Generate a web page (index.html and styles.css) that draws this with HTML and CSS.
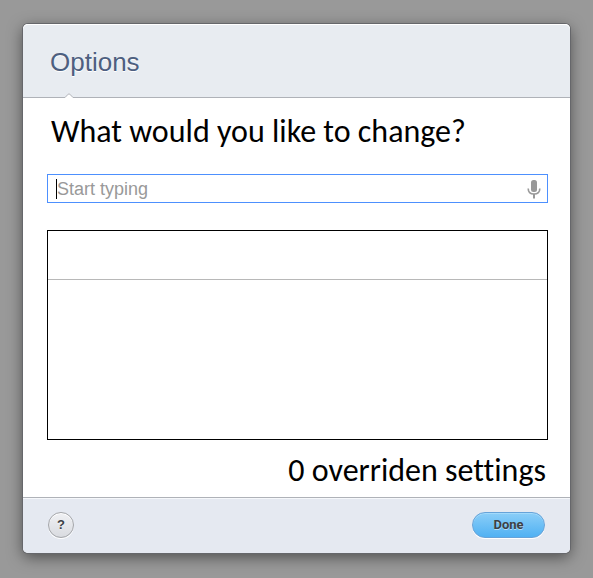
FILE: index.html
```html
<!DOCTYPE html>
<html lang="en">
<head>
<meta charset="utf-8">
<meta name="viewport" content="width=device-width, initial-scale=1">
<title>Options</title>
<link rel="stylesheet" href="styles.css">
</head>
<body>
<main class="dialog">
  <header class="dialog-header">
    <h1 class="title">Options</h1>
    <svg class="notch" viewBox="0 0 8 5" aria-hidden="true"><path d="M0 5V4.500L4 .5L8 4.500V5Z" fill="#fff"/><path d="M0 4.500L3.200 1.200Q4 .4 4.800 1.200L8 4.500" fill="none" stroke="#afb2b8"/></svg>
  </header>
  <section class="content">
    <label class="prompt" for="search">What would you like to change?</label>
    <div class="search">
      <span class="caret"></span>
      <input class="search-input" id="search" type="text" placeholder="Start typing">
      <button class="mic" type="button" aria-label="Voice input">
        <svg viewBox="0 0 14 20" width="14" height="20"><rect x="4" y="1" width="6" height="12" rx="2.500" fill="#999"/><path d="M1.200 9.500C1.200 13 3.500 15 7 15S12.800 13 12.800 9.500" fill="none" stroke="#999" stroke-width="1.600"/><path d="M7 15V19.500" stroke="#999" stroke-width="2"/></svg>
      </button>
    </div>
    <div class="results"><div class="results-head"></div></div>
    <p class="summary">0 overriden settings</p>
  </section>
  <footer class="dialog-footer">
    <button class="help" type="button">?</button>
    <button class="done" type="button">Done</button>
  </footer>
</main>
</body>
</html>
```
FILE: styles.css
```css
* { box-sizing: border-box; }
body {
  margin: 0;
  min-height: 100vh;
  padding: 24px 23px 25px;
  display: flex;
  background: #999;
  font-family: "Liberation Sans", Arial, sans-serif;
}
.dialog {
  flex: 1;
  display: flex;
  flex-direction: column;
  background: #fff;
  border-radius: 5px;
  box-shadow: 0 0 0 1px #66676b, 0 4px 15px rgba(0, 0, 0, .5);
}
.dialog-header {
  position: relative;
  height: 74px;
  padding: 0 27px;
  display: flex;
  align-items: center;
  background: #e8ecf1;
  border-bottom: 1px solid #afb2b8;
  border-radius: 5px 5px 0 0;
  box-shadow: inset 0 1px #fff;
}
.title {
  margin: 2px 0 0;
  font-size: 26px;
  line-height: 32px;
  font-weight: 400;
  color: #4d5f80;
  text-shadow: 0 1px #fff;
}
.notch {
  position: absolute;
  left: 42px;
  bottom: -1px;
  width: 8px;
  height: 5px;
}
.content {
  flex: 1;
  display: flex;
  flex-direction: column;
  padding: 16px 22px 8px 24px;
}
.prompt, .summary {
  font-family: Calibri, Carlito, Lato, sans-serif;
  font-size: 32px;
  line-height: 36px;
  font-variant-ligatures: none;
  color: #000;
}
.prompt { padding-left: 4px; }
.search {
  position: relative;
  display: flex;
  align-items: center;
  height: 29px;
  margin-top: 24px;
  border: 1px solid #4d90fe;
}
.caret {
  position: absolute;
  left: 8px;
  top: 4px;
  width: 1px;
  height: 20px;
  background: #000;
}
.search-input {
  flex: 1;
  min-width: 0;
  height: 27px;
  padding: 2px 9px 0;
  border: 0;
  outline: 0;
  background: none;
  font-family: inherit;
  font-size: 18px;
}
.search-input::placeholder { color: #999; }
.mic {
  display: flex;
  margin-right: 6px;
  padding: 0;
  border: 0;
  background: none;
}
.results {
  flex: 1;
  margin-top: 27px;
  border: 1px solid #000;
}
.results-head {
  height: 49px;
  border-bottom: 1px solid #b8b8b8;
}
.summary {
  margin: 13px 2px 0 0;
  text-align: right;
}
.dialog-footer {
  display: flex;
  align-items: center;
  justify-content: space-between;
  height: 56px;
  padding: 0 25px 2px;
  background: #e5e9f1;
  border-top: 1px solid #afb2b8;
  border-radius: 0 0 5px 5px;
  box-shadow: inset 0 1px #f6f8fb;
}
.help, .done {
  height: 26px;
  padding: 0;
  color: #3c4045;
  font-size: 13px;
  font-weight: 700;
  text-shadow: 0 1px rgba(255, 255, 255, .5);
}
.help {
  width: 26px;
  border: 1px solid #a4a6aa;
  border-radius: 50%;
  background: linear-gradient(#f0f1f4, #d9dbe0);
  box-shadow: 0 1px #fff, inset 0 1px #fff;
  font-family: "Liberation Sans", Arial, sans-serif;
}
.done {
  width: 73px;
  border: 1px solid #66a3d9;
  border-radius: 13px;
  background: linear-gradient(#8bcef8, #50b1f3);
  box-shadow: 0 1px #fff, inset 0 1px #a3dafb;
  font-family: Roboto, sans-serif;
}
```
